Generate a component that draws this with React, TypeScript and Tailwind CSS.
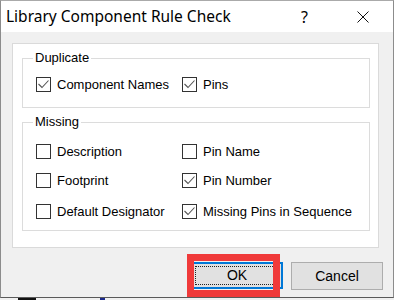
import React from 'react';

const sans = '"Liberation Sans", Arial, sans-serif';

function CheckBox({ checked }: { checked: boolean }) {
    return (
        <svg width="15" height="15" viewBox="0 0 15 15" className="shrink-0">
            <rect x="0.5" y="0.5" width="14" height="14" fill="#ffffff" stroke="#333333" />
            {checked && (
                <polyline points="2.5,7 6,10.5 12.5,3.5" fill="none" stroke="#555555" strokeWidth="1.1" />
            )}
        </svg>
    );
}

function Check({ label, checked }: { label: string; checked: boolean }) {
    return (
        <div className="flex items-center h-[17px]">
            <CheckBox checked={checked} />
            <span className="ml-[6px] text-[13px] leading-none text-black whitespace-nowrap">{label}</span>
        </div>
    );
}

function Group({ title, children, className }: { title: string; children: React.ReactNode; className?: string }) {
    return (
        <fieldset className={`w-[348px] ml-[9px] border border-[#dcdcdc] px-0 ${className ?? ''}`}>
            <legend className="ml-[10px] px-[2px] text-[13px] leading-[16px] text-black">{title}</legend>
            {children}
        </fieldset>
    );
}

export default function App() {
    return (
        <div className="relative w-[394px] h-[300px] bg-[#f0f0f0] overflow-hidden" style={{ fontFamily: sans }}>
            <div className="h-[298px] flex flex-col border-t border-l border-r border-b border-t-[#aaaaaa] border-l-[#8c8c8c] border-r-[#8c8c8c] border-b-[#5a5a5a]">
                {/* title bar */}
                <div className="h-[31px] shrink-0 bg-white flex items-center relative">
                    <span
                        className="ml-[5px] text-[15.5px] text-black leading-none pt-[1px]"
                        style={{ fontFamily: '"Noto Sans", "Open Sans", sans-serif' }}
                    >
                        Library Component Rule Check
                    </span>
                    <span
                        className="ml-auto text-[16px] text-black leading-none pt-[1px]"
                        style={{ fontFamily: '"Noto Sans", sans-serif' }}
                    >
                        ?
                    </span>
                    <svg width="12" height="12" viewBox="0 0 12 12" className="ml-[49px] mr-[24px]">
                        <path d="M0.5 0.5 L11.5 11.5 M11.5 0.5 L0.5 11.5" stroke="#111111" strokeWidth="1" />
                    </svg>
                </div>

                {/* client area */}
                <div className="flex-1 bg-[#f0f0f0] flex flex-col">
                    <div className="mt-[11px] ml-[11px] w-[367px] h-[205px] bg-white border border-[#dadada] pt-[6px]">
                        <Group title="Duplicate" className="pt-[10px] pb-[14px]">
                            <div className="grid grid-cols-[146px_1fr] pl-[13px]">
                                <Check label="Component Names" checked />
                                <Check label="Pins" checked />
                            </div>
                        </Group>
                        <Group title="Missing" className="mt-[6px] pt-[13px] pb-[10px]">
                            <div className="grid grid-cols-[146px_1fr] pl-[13px]">
                                <Check label="Description" checked={false} />
                                <Check label="Pin Name" checked={false} />
                            </div>
                            <div className="grid grid-cols-[146px_1fr] pl-[13px] mt-[12px]">
                                <Check label="Footprint" checked={false} />
                                <Check label="Pin Number" checked />
                            </div>
                            <div className="grid grid-cols-[146px_1fr] pl-[13px] mt-[14px]">
                                <Check label="Default Designator" checked={false} />
                                <Check label="Missing Pins in Sequence" checked />
                            </div>
                        </Group>
                    </div>

                    <div className="mt-[14px] flex justify-end gap-[8px] pr-[10px]">
                        <button className="w-[92px] h-[27px] bg-[#e1e1e1] border-2 border-[#0078d7] p-[2px] text-[14px] text-black">
                            <span className="flex items-center justify-center w-full h-full border border-dotted border-[#222222]">OK</span>
                        </button>
                        <button className="w-[92px] h-[28px] bg-[#e1e1e1] border border-[#adadad] text-[14px] text-black">
                            Cancel
                        </button>
                    </div>
                </div>
            </div>

            {/* strip of desktop below the window */}
            <div className="flex h-[2px]">
                <div className="ml-[18px] w-[18px] bg-[#111111]" />
                <div className="ml-[64px] w-[5px] bg-[#1c2a8c]" />
            </div>

            {/* red highlight around OK */}
            <div className="absolute left-[187px] top-[254px] w-[93px] h-[43px] border-[7px] border-[#f03a3a]" />
        </div>
    );
}
